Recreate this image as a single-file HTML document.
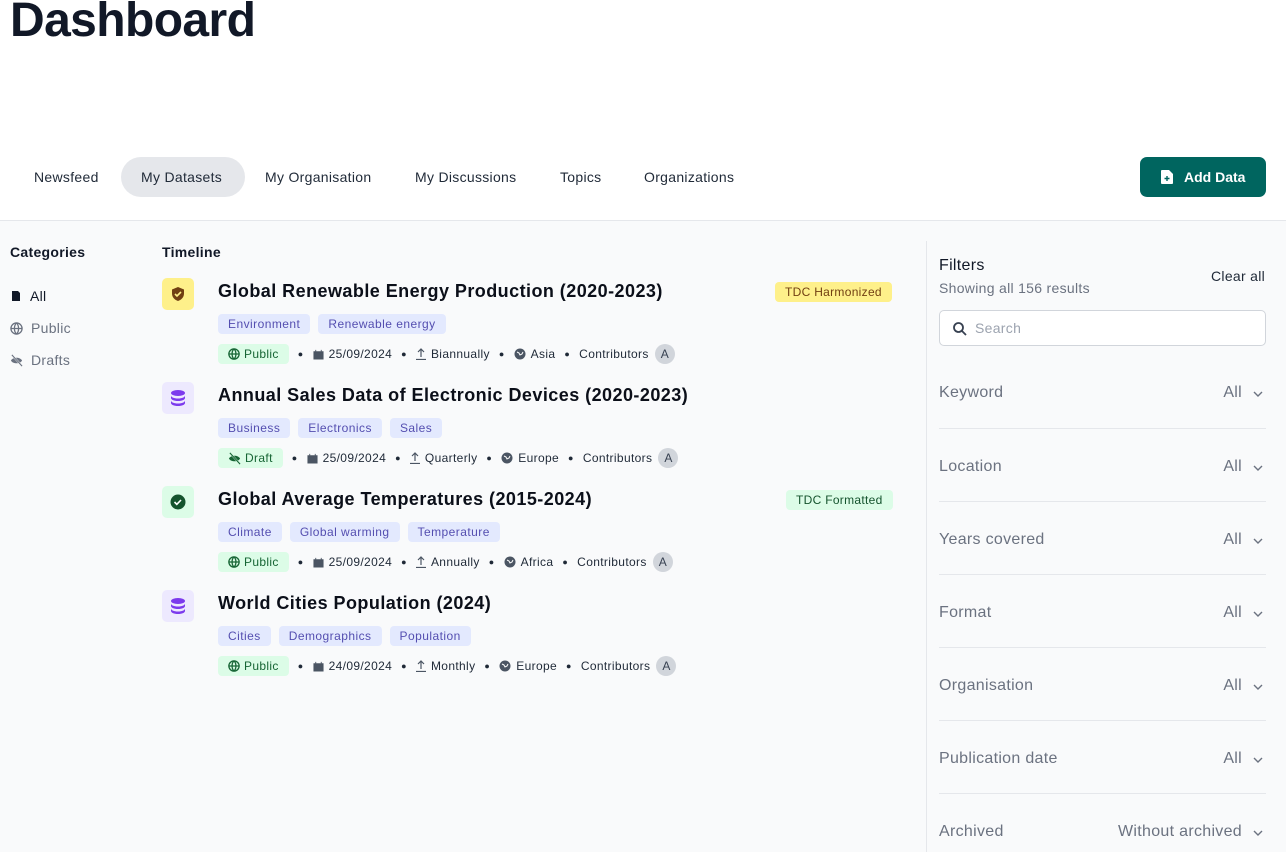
<!DOCTYPE html>
<html><head><meta charset="utf-8"><style>
*{box-sizing:border-box;margin:0;padding:0}
html,body{width:1286px;height:852px;overflow:hidden}
body{font-family:"Liberation Sans",sans-serif;color:#111827;background:#f9fafb;position:relative;letter-spacing:.3px}
.top{position:absolute;left:0;top:0;width:1286px;height:221px;background:#fff;border-bottom:1px solid #e5e7eb}
h1{position:absolute;left:10px;top:-7px;font-size:48px;font-weight:700;letter-spacing:-.6px;color:#111827}
.tab{position:absolute;top:157px;height:40px;line-height:40px;font-size:14px;color:#1f2937;padding:0 20px}
.tab.act{background:#e5e7eb;border-radius:20px}
.btn{position:absolute;left:1140px;top:157px;width:126px;height:40px;background:#00655f;border-radius:7px;color:#fff;font-weight:700;font-size:14px;line-height:40px;padding-left:44px;letter-spacing:0}
.abs{position:absolute}
.cat{position:absolute;left:10px;font-size:14px;color:#6b7280;display:flex;align-items:center;gap:8px}
.ic{position:absolute;left:162px;width:32px;height:32px;border-radius:5px;display:flex;align-items:center;justify-content:center}
.ttl{position:absolute;left:218px;font-size:18px;font-weight:700;color:#0b0f19;white-space:nowrap;letter-spacing:.45px}
.tags{position:absolute;left:218px;display:flex;gap:8px}
.tag{background:#e0e7ff;color:#3730a3;font-size:12px;height:20px;line-height:20px;padding:0 10px;border-radius:4px;opacity:.85;letter-spacing:.45px}
.meta{position:absolute;left:218px;display:flex;align-items:center;font-size:12px;color:#1f2937;white-space:nowrap;letter-spacing:.35px}
.meta svg{margin-right:5px}
.st{background:#dcfce7;color:#166534;height:20px;line-height:20px;padding:0 10px 0 10px;border-radius:4px;display:flex;align-items:center;gap:4px;font-size:12px}
.st svg{margin-right:0}
.dot{margin:0 9px;font-size:9px}
.av{width:20px;height:20px;border-radius:50%;background:#d1d5db;color:#374151;text-align:center;line-height:20px;margin-left:6px;font-size:12px;letter-spacing:0}
.badge{position:absolute;font-size:12px;height:20px;line-height:20px;padding:0 10px;border-radius:4px}
.frow{position:absolute;left:939px;width:327px;font-size:16px;color:#6b7280;border-top:1px solid #e5e7eb;height:73px}
.frow span{position:absolute;top:29px}
.frow .r{right:24px}
.frow svg{position:absolute;right:2px;top:35px}
</style></head><body>
<div class="top">
<h1>Dashboard</h1>
<div class="tab" style="left:14px">Newsfeed</div>
<div class="tab act" style="left:121px;width:124px">My Datasets</div>
<div class="tab" style="left:245px">My Organisation</div>
<div class="tab" style="left:395px">My Discussions</div>
<div class="tab" style="left:540px">Topics</div>
<div class="tab" style="left:624px">Organizations</div>
<div class="btn"><svg class="abs" style="left:21px;top:13px" width="12" height="14" viewBox="0 0 12 14"><path d="M1 0h7l4 4v9a1 1 0 0 1-1 1H1a1 1 0 0 1-1-1V1a1 1 0 0 1 1-1z" fill="#fff"/><path d="M6 6v5M3.5 8.5h5" stroke="#00655f" stroke-width="1.4"/></svg>Add Data</div>
</div>

<div class="abs" style="left:10px;top:244px;font-size:14px;font-weight:700">Categories</div>
<div class="cat" style="top:288px;color:#111827"><svg width="12" height="12" viewBox="0 0 12 12"><path d="M2 1h6l2 2v8H2z" fill="#111827"/></svg>All</div>
<div class="cat" style="top:320px"><svg width="13" height="13" viewBox="0 0 14 14" fill="none" stroke="#6b7280" stroke-width="1.4"><circle cx="7" cy="7" r="6"/><path d="M1 7h12M7 1c-3 3-3 9 0 12M7 1c3 3 3 9 0 12"/></svg>Public</div>
<div class="cat" style="top:352px"><svg width="13" height="13" viewBox="0 0 14 14"><path d="M1 7c2-4 10-4 12 0-2 4-10 4-12 0z" fill="#6b7280"/><path d="M2 1l11 12" stroke="#f9fafb" stroke-width="2"/><path d="M2 1l11 12" stroke="#6b7280" stroke-width="1.2"/></svg>Drafts</div>

<div class="abs" style="left:162px;top:244px;font-size:14px;font-weight:700">Timeline</div>

<div class="ic" style="top:278px;background:#fef08a"><svg width="16" height="16" viewBox="0 0 16 16"><path d="M8 1l6 2.5v4c0 4-3 6.5-6 7.5-3-1-6-3.5-6-7.5v-4z" fill="#713f12"/><path d="M5 8l2 2 4-4" stroke="#fef08a" stroke-width="1.6" fill="none"/></svg></div>
<div class="ttl" style="top:281px">Global Renewable Energy Production (2020-2023)</div>
<div class="badge" style="left:775px;top:282px;background:#fef08a;color:#713f12">TDC Harmonized</div>
<div class="tags" style="top:314px"><div class="tag">Environment</div><div class="tag">Renewable energy</div></div>
<div class="meta" style="top:344px"><div class="st"><svg width="12" height="12" viewBox="0 0 14 14" fill="none" stroke="#166534" stroke-width="1.5"><circle cx="7" cy="7" r="6"/><path d="M1 7h12M7 1c-3 3-3 9 0 12M7 1c3 3 3 9 0 12"/></svg>Public</div><span class="dot">●</span>
<svg width="11" height="11" viewBox="0 0 12 12"><path d="M1 3h10v8H1z M3 1v2M9 1v2" fill="#4b5563" stroke="#4b5563"/></svg>25/09/2024<span class="dot">●</span>
<svg width="10" height="12" viewBox="0 0 10 12" fill="none" stroke="#4b5563" stroke-width="1.2"><path d="M5 9V1M2 4l3-3 3 3M0 11.5h10"/></svg>Biannually<span class="dot">●</span>
<svg width="12" height="12" viewBox="0 0 12 12"><circle cx="6" cy="6" r="5.5" fill="#4b5563"/><path d="M3 4l2 1 1 2 2-1 1-2" stroke="#fff" fill="none"/></svg>Asia<span class="dot">●</span>Contributors<div class="av">A</div></div>

<div class="ic" style="top:382px;background:#ede9fe"><svg width="14" height="16" viewBox="0 0 14 16" fill="#7c3aed"><ellipse cx="7" cy="3" rx="7" ry="3"/><path d="M0 5.5c0 1.7 3 3 7 3s7-1.3 7-3V8c0 1.7-3 3-7 3S0 9.7 0 8z"/><path d="M0 10.5c0 1.7 3 3 7 3s7-1.3 7-3V13c0 1.7-3 3-7 3s-7-1.3-7-3z"/></svg></div>
<div class="ttl" style="top:385px">Annual Sales Data of Electronic Devices (2020-2023)</div>
<div class="tags" style="top:418px"><div class="tag">Business</div><div class="tag">Electronics</div><div class="tag">Sales</div></div>
<div class="meta" style="top:448px"><div class="st"><svg width="13" height="13" viewBox="0 0 14 14"><path d="M1 7c2-4 10-4 12 0-2 4-10 4-12 0z" fill="#166534"/><path d="M2 1l11 12" stroke="#dcfce7" stroke-width="2"/><path d="M2 1l11 12" stroke="#166534" stroke-width="1.2"/></svg>Draft</div><span class="dot">●</span>
<svg width="11" height="11" viewBox="0 0 12 12"><path d="M1 3h10v8H1z M3 1v2M9 1v2" fill="#4b5563" stroke="#4b5563"/></svg>25/09/2024<span class="dot">●</span>
<svg width="10" height="12" viewBox="0 0 10 12" fill="none" stroke="#4b5563" stroke-width="1.2"><path d="M5 9V1M2 4l3-3 3 3M0 11.5h10"/></svg>Quarterly<span class="dot">●</span>
<svg width="12" height="12" viewBox="0 0 12 12"><circle cx="6" cy="6" r="5.5" fill="#4b5563"/><path d="M3 4l2 1 1 2 2-1 1-2" stroke="#fff" fill="none"/></svg>Europe<span class="dot">●</span>Contributors<div class="av">A</div></div>

<div class="ic" style="top:486px;background:#dcfce7"><svg width="16" height="16" viewBox="0 0 16 16"><circle cx="8" cy="8" r="7.5" fill="#14532d"/><path d="M4.5 8l2.3 2.3 4.2-4.3" stroke="#fff" stroke-width="1.6" fill="none"/></svg></div>
<div class="ttl" style="top:489px">Global Average Temperatures (2015-2024)</div>
<div class="badge" style="left:786px;top:490px;background:#dcfce7;color:#14532d">TDC Formatted</div>
<div class="tags" style="top:522px"><div class="tag">Climate</div><div class="tag">Global warming</div><div class="tag">Temperature</div></div>
<div class="meta" style="top:552px"><div class="st"><svg width="12" height="12" viewBox="0 0 14 14" fill="none" stroke="#166534" stroke-width="1.5"><circle cx="7" cy="7" r="6"/><path d="M1 7h12M7 1c-3 3-3 9 0 12M7 1c3 3 3 9 0 12"/></svg>Public</div><span class="dot">●</span>
<svg width="11" height="11" viewBox="0 0 12 12"><path d="M1 3h10v8H1z M3 1v2M9 1v2" fill="#4b5563" stroke="#4b5563"/></svg>25/09/2024<span class="dot">●</span>
<svg width="10" height="12" viewBox="0 0 10 12" fill="none" stroke="#4b5563" stroke-width="1.2"><path d="M5 9V1M2 4l3-3 3 3M0 11.5h10"/></svg>Annually<span class="dot">●</span>
<svg width="12" height="12" viewBox="0 0 12 12"><circle cx="6" cy="6" r="5.5" fill="#4b5563"/><path d="M3 4l2 1 1 2 2-1 1-2" stroke="#fff" fill="none"/></svg>Africa<span class="dot">●</span>Contributors<div class="av">A</div></div>

<div class="ic" style="top:590px;background:#ede9fe"><svg width="14" height="16" viewBox="0 0 14 16" fill="#7c3aed"><ellipse cx="7" cy="3" rx="7" ry="3"/><path d="M0 5.5c0 1.7 3 3 7 3s7-1.3 7-3V8c0 1.7-3 3-7 3S0 9.7 0 8z"/><path d="M0 10.5c0 1.7 3 3 7 3s7-1.3 7-3V13c0 1.7-3 3-7 3s-7-1.3-7-3z"/></svg></div>
<div class="ttl" style="top:593px">World Cities Population (2024)</div>
<div class="tags" style="top:626px"><div class="tag">Cities</div><div class="tag">Demographics</div><div class="tag">Population</div></div>
<div class="meta" style="top:656px"><div class="st"><svg width="12" height="12" viewBox="0 0 14 14" fill="none" stroke="#166534" stroke-width="1.5"><circle cx="7" cy="7" r="6"/><path d="M1 7h12M7 1c-3 3-3 9 0 12M7 1c3 3 3 9 0 12"/></svg>Public</div><span class="dot">●</span>
<svg width="11" height="11" viewBox="0 0 12 12"><path d="M1 3h10v8H1z M3 1v2M9 1v2" fill="#4b5563" stroke="#4b5563"/></svg>24/09/2024<span class="dot">●</span>
<svg width="10" height="12" viewBox="0 0 10 12" fill="none" stroke="#4b5563" stroke-width="1.2"><path d="M5 9V1M2 4l3-3 3 3M0 11.5h10"/></svg>Monthly<span class="dot">●</span>
<svg width="12" height="12" viewBox="0 0 12 12"><circle cx="6" cy="6" r="5.5" fill="#4b5563"/><path d="M3 4l2 1 1 2 2-1 1-2" stroke="#fff" fill="none"/></svg>Europe<span class="dot">●</span>Contributors<div class="av">A</div></div>

<div class="abs" style="left:926px;top:241px;width:1px;height:611px;background:#e5e7eb"></div>
<div class="abs" style="left:939px;top:257px;font-size:16px;color:#111827">Filters</div>
<div class="abs" style="left:939px;top:280px;font-size:14px;color:#6b7280">Showing all 156 results</div>
<div class="abs" style="left:1211px;top:268px;font-size:14px;color:#1f2937">Clear all</div>
<div class="abs" style="left:939px;top:310px;width:327px;height:36px;background:#fff;border:1px solid #d1d5db;border-radius:5px">
<svg class="abs" style="left:13px;top:11px" width="14" height="14" viewBox="0 0 14 14" fill="none" stroke="#374151" stroke-width="1.8"><circle cx="5.5" cy="5.5" r="4.5"/><path d="M9 9l4 4"/></svg>
<span class="abs" style="left:35px;top:9px;font-size:14px;color:#9ca3af">Search</span></div>
<div class="frow" style="top:355px;border-top:none"><span>Keyword</span><span class="r">All</span><svg width="12" height="8" viewBox="0 0 12 8" fill="none" stroke="#6b7280" stroke-width="1.4"><path d="M2 2l4 4 4-4"/></svg></div>
<div class="frow" style="top:428px"><span>Location</span><span class="r">All</span><svg width="12" height="8" viewBox="0 0 12 8" fill="none" stroke="#6b7280" stroke-width="1.4"><path d="M2 2l4 4 4-4"/></svg></div>
<div class="frow" style="top:501px"><span>Years covered</span><span class="r">All</span><svg width="12" height="8" viewBox="0 0 12 8" fill="none" stroke="#6b7280" stroke-width="1.4"><path d="M2 2l4 4 4-4"/></svg></div>
<div class="frow" style="top:574px"><span>Format</span><span class="r">All</span><svg width="12" height="8" viewBox="0 0 12 8" fill="none" stroke="#6b7280" stroke-width="1.4"><path d="M2 2l4 4 4-4"/></svg></div>
<div class="frow" style="top:647px"><span>Organisation</span><span class="r">All</span><svg width="12" height="8" viewBox="0 0 12 8" fill="none" stroke="#6b7280" stroke-width="1.4"><path d="M2 2l4 4 4-4"/></svg></div>
<div class="frow" style="top:720px"><span>Publication date</span><span class="r">All</span><svg width="12" height="8" viewBox="0 0 12 8" fill="none" stroke="#6b7280" stroke-width="1.4"><path d="M2 2l4 4 4-4"/></svg></div>
<div class="frow" style="top:793px;height:59px"><span>Archived</span><span class="r">Without archived</span><svg width="12" height="8" viewBox="0 0 12 8" fill="none" stroke="#6b7280" stroke-width="1.4"><path d="M2 2l4 4 4-4"/></svg></div>
</body></html>
